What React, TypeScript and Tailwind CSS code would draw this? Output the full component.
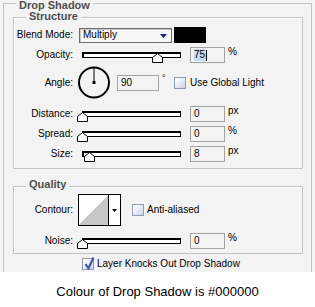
import React from 'react';

const Label: React.FC<{ children: React.ReactNode }> = ({ children }) => (
  <span className="w-[59px] shrink-0 text-right text-[10px] leading-[12px]">{children}</span>
);

const NumBox: React.FC<{ value: string; w?: string; selected?: boolean }> = ({ value, w = 'w-[35px]', selected }) => (
  <div className={`${w} h-[16px] shrink-0 border border-[#a3a3a3] bg-[#f4f4f4] pl-[3px] flex items-center text-[10px] leading-[12px]`}>
    {selected ? (
      <>
        <span className="bg-[#c5dcf6] pr-[1px]">{value}</span>
        <span className="w-px h-[11px] bg-black" />
      </>
    ) : (
      <span>{value}</span>
    )}
  </div>
);

const Slider: React.FC<{ pos: number }> = ({ pos }) => (
  <div className="relative ml-[4px] w-[109px] h-[16px] shrink-0">
    <div className="absolute left-[5px] top-[5px] w-[99px] h-[6px] border border-black border-t-2 border-l-2 bg-white" />
    <svg className="absolute top-[6px]" style={{ left: pos }} width="11" height="10" viewBox="0 0 11 10">
      <path d="M5.5 0.5 L10.5 4.5 L10.5 9.5 L0.5 9.5 L0.5 4.5 Z" fill="#fff" stroke="#000" strokeWidth="1" />
    </svg>
  </div>
);

const Checkbox: React.FC<{ checked?: boolean }> = ({ checked }) => (
  <span className="relative w-[12px] h-[12px] shrink-0 border border-[#8f9cb4] bg-[linear-gradient(135deg,#ffffff_10%,#c8d2e6)]">
    {checked && (
      <svg className="absolute left-[1px] top-[-2px]" width="11" height="13" viewBox="0 0 11 13">
        <path d="M1.5 7 L4.5 11.5 L9.5 0.5" fill="none" stroke="#4150a8" strokeWidth="2" />
      </svg>
    )}
  </span>
);

const Group: React.FC<{ title: string; className: string; titleTop: string; children: React.ReactNode }> = ({ title, className, titleTop, children }) => (
  <div className={`relative border border-[#c3c3c3] shadow-[inset_1px_1px_0_#ffffff] ${className}`}>
    <span className={`absolute left-[12px] ${titleTop} px-[3px] bg-[#f3f3f3] text-[11px] leading-[11px] font-bold text-[#4e4e4e]`}>
      {title}
    </span>
    {children}
  </div>
);

export default function App() {
  return (
    <div className="w-[315px] h-[307px] bg-white text-black overflow-hidden font-['Liberation_Sans',Arial,sans-serif]">
      <div className="h-[272px] bg-[#f3f3f3] pt-[3px] pl-[3px]">
        <div className="relative w-[309px] h-[269px] border-l border-t border-r border-[#c3c3c3]">
          <span className="absolute left-[12px] top-[-4px] px-[3px] bg-[#f3f3f3] text-[11px] leading-[11px] font-bold text-[#4e4e4e]">
            Drop Shadow
          </span>

          {/* Structure */}
          <Group title="Structure" className="ml-[9px] mt-[13px] w-[290px] h-[152px]" titleTop="top-[-7px]">
            <div className="flex items-center mt-[9px] h-[16px]">
              <Label>Blend Mode:</Label>
              <div className="relative ml-[6px] w-[93px] h-[15px] border border-[#6e6e6e] bg-[#f8f8f8] shadow-[inset_1px_1px_0_#c4c4c4] pl-[3px] flex items-center text-[10px] leading-[12px]">
                Multiply
                <svg className="absolute right-[4px] top-[5px]" width="7" height="4" viewBox="0 0 7 4">
                  <path d="M0 0 H7 L3.5 4 Z" fill="#1c2270" />
                </svg>
              </div>
              <div className="ml-[2px] w-[32px] h-[16px] bg-black" />
            </div>

            <div className="flex items-center mt-[4px] h-[16px]">
              <Label>Opacity:</Label>
              <Slider pos={75} />
              <div className="ml-[4px]">
                <NumBox value="75" selected />
              </div>
              <span className="ml-[3px] self-start text-[10px] leading-[10px]">%</span>
            </div>

            <div className="flex items-center mt-[3px] h-[33px]">
              <Label>Angle:</Label>
              <svg className="ml-[4px] shrink-0" width="34" height="33" viewBox="0 0 34 33">
                <circle cx="17" cy="16.5" r="15" fill="none" stroke="#000" strokeWidth="2" />
                <line x1="17" y1="16.5" x2="17" y2="1.5" stroke="#000" strokeWidth="1" />
                <rect x="15.5" y="15" width="3" height="3" fill="#000" />
              </svg>
              <div className="ml-[6px]">
                <NumBox value="90" w="w-[42px]" />
              </div>
              <span className="ml-[3px] w-[4px] self-center mb-[8px] text-[9px] leading-[9px]">°</span>
              <div className="ml-[8px] flex items-center">
                <Checkbox />
                <span className="ml-[4px] text-[10px] leading-[12px]">Use Global Light</span>
              </div>
            </div>

            <div className="flex items-center mt-[7px] h-[16px]">
              <Label>Distance:</Label>
              <Slider pos={0} />
              <div className="ml-[4px]">
                <NumBox value="0" />
              </div>
              <span className="ml-[3px] self-start text-[10px] leading-[10px]">px</span>
            </div>

            <div className="flex items-center mt-[4px] h-[16px]">
              <Label>Spread:</Label>
              <Slider pos={0} />
              <div className="ml-[4px]">
                <NumBox value="0" />
              </div>
              <span className="ml-[3px] self-start text-[10px] leading-[10px]">%</span>
            </div>

            <div className="flex items-center mt-[4px] h-[16px]">
              <Label>Size:</Label>
              <Slider pos={7} />
              <div className="ml-[4px]">
                <NumBox value="8" />
              </div>
              <span className="ml-[3px] self-start text-[10px] leading-[10px]">px</span>
            </div>
          </Group>

          {/* Quality */}
          <Group title="Quality" className="ml-[9px] mt-[17px] w-[290px] h-[68px]" titleTop="top-[-8px]">
            <div className="flex items-center mt-[7px] h-[32px]">
              <Label>Contour:</Label>
              <div className="ml-[5px] w-[43px] h-[32px] border border-black flex">
                <div className="w-[29px] h-full bg-[linear-gradient(to_bottom_right,#ffffff_50%,#c8c8c8_50%)]" />
                <div className="w-[12px] h-full border-l border-black bg-white flex items-center justify-center">
                  <svg width="5" height="3" viewBox="0 0 5 3">
                    <path d="M0 0 H5 L2.5 3 Z" fill="#000" />
                  </svg>
                </div>
              </div>
              <div className="ml-[11px] flex items-center">
                <Checkbox />
                <span className="ml-[3px] text-[10px] leading-[12px]">Anti-aliased</span>
              </div>
            </div>

            <div className="flex items-center mt-[7px] h-[16px]">
              <Label>Noise:</Label>
              <Slider pos={0} />
              <div className="ml-[4px]">
                <NumBox value="0" />
              </div>
              <span className="ml-[3px] self-start text-[10px] leading-[10px]">%</span>
            </div>
          </Group>

          <div className="flex items-center ml-[78px] mt-[3px] h-[14px]">
            <Checkbox checked />
            <span className="ml-[3px] text-[10px] leading-[12px]">Layer Knocks Out Drop Shadow</span>
          </div>
        </div>
      </div>
      <p className="mt-[12px] text-center text-[13px] leading-[16px]">Colour of Drop Shadow is #000000</p>
    </div>
  );
}
